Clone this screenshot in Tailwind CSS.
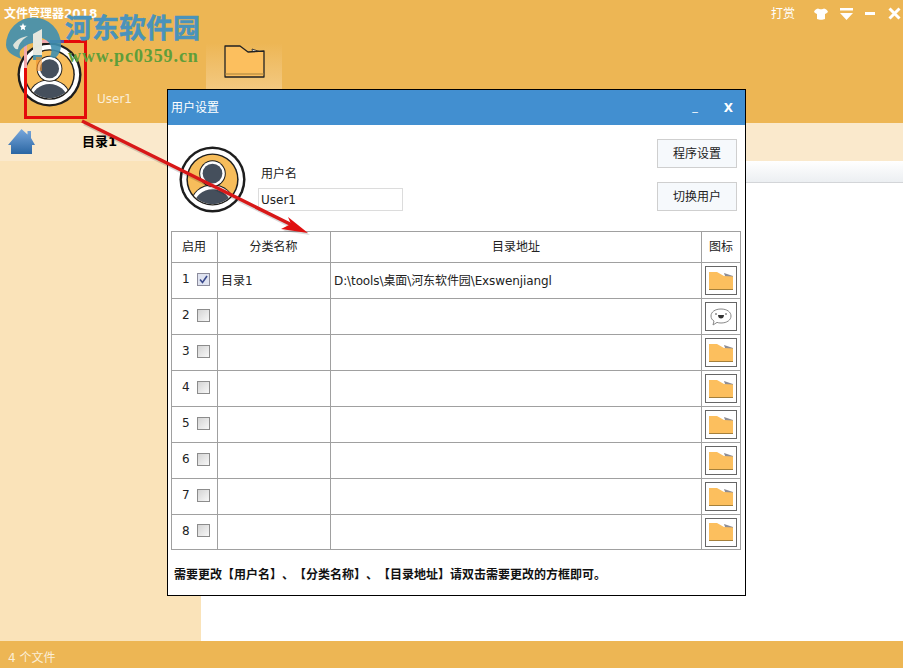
<!DOCTYPE html>
<html>
  <head>
    <meta charset="utf-8" />
    <title>文件管理器2018</title>
    <script src="https://cdn.jsdelivr.net/npm/@tailwindcss/browser@4"></script>
  </head>
  <body class="font-['DejaVu_Sans','Noto_Sans_CJK_SC',sans-serif] text-[12px] text-[#222]">
    <!-- shared icons -->
    <svg class="absolute h-0 w-0">
      <defs>
        <clipPath id="avatar-clip"><circle cx="34" cy="34" r="25" /></clipPath>
      </defs>
      <symbol id="avatar" viewBox="0 0 68 68">
        <circle cx="34" cy="34" r="33.500" fill="#1d1d1d" />
        <circle cx="34" cy="34" r="31" fill="#fff" />
        <circle cx="34" cy="34" r="26.500" fill="#1d1d1d" />
        <circle cx="34" cy="34" r="25" fill="#f7bd5b" />
        <g clip-path="url(#avatar-clip)">
          <ellipse cx="34" cy="58" rx="22" ry="19" fill="#1d1d1d" />
          <ellipse cx="34" cy="58" rx="21" ry="18" fill="#fff" />
          <ellipse cx="34" cy="60" rx="18.500" ry="16" fill="#454f5c" />
        </g>
        <circle cx="34" cy="28" r="13.500" fill="#1d1d1d" />
        <circle cx="34" cy="28" r="12.500" fill="#fff" />
        <circle cx="34" cy="28" r="10" fill="#454f5c" />
      </symbol>
      <symbol id="folder" viewBox="0 0 24 18">
        <path d="M15 1l9 3v3h-7z" fill="#8d8d95" />
        <path d="M0 0h8l7 4 9 .5V18H0z" fill="#fcbf5e" />
        <path d="M0 17.500h24" stroke="#a5803b" />
      </symbol>
    </svg>

    <div class="relative flex h-[668px] w-[903px] flex-col overflow-hidden bg-white">
      <!-- top bar -->
      <header class="flex h-[123px] shrink-0 flex-col bg-[#edb654] text-white">
        <div class="flex h-[27px] items-center justify-between pl-1 pr-[2px]">
          <span class="font-bold">文件管理器2018</span>
          <div class="flex items-center">
            <span class="mr-[19px]">打赏</span>
            <svg class="mr-[12px] h-3 w-[14px]" viewBox="0 0 14 12"><path d="M4 .5c1 1 5 1 6 0C12 1 13.500 2 14 4l-2.500 2-.5-.5V11c-2 1-6 1-8 0V5.500L2.500 6 0 4C.5 2 2 1 4 .5z" fill="#fff" /></svg>
            <svg class="mr-[12px] h-3 w-[13px]" viewBox="0 0 13 12"><path d="M0 0h13v2.500H0zM0 5h13l-6.500 7z" fill="#fff" /></svg>
            <div class="mr-[13px] h-[3px] w-[10px] bg-white"></div>
            <svg class="h-[13px] w-[13px]" viewBox="0 0 13 13"><path d="M1.500 1.500l10 10M11.500 1.500l-10 10" stroke="#fff" stroke-width="3" /></svg>
          </div>
        </div>
        <div class="flex flex-1">
          <div class="flex w-[206px] items-start">
            <svg class="ml-[17px] mt-[15px] h-[65px] w-[65px]"><use href="#avatar" /></svg>
            <span class="ml-[15px] mt-[63px] text-[#fbeed7]">User1</span>
          </div>
          <div class="mt-[16px] flex h-[80px] w-[76px] justify-center bg-gradient-to-b from-[#edb654] to-[#f7d69c] pt-[2px]">
            <svg class="h-[33px] w-[41px]" viewBox="0 0 41 33">
              <path d="M28 4l9 3v3h-8z" fill="#e8e8e8" stroke="#222" stroke-width=".8" />
              <path d="M1 1h15l8 6 16-1v26H1z" fill="#fcbf5e" stroke="#222" stroke-width="1.300" stroke-linejoin="round" />
              <path d="M1 29h39" stroke="#a5803b" />
            </svg>
          </div>
        </div>
      </header>

      <!-- path bar -->
      <div class="flex h-[38px] shrink-0 items-center bg-[#fae9cc] pl-2">
        <svg class="h-[26px] w-[27px]" viewBox="0 0 27 26">
          <defs>
            <linearGradient id="home" x1="0" y1="0" x2="0" y2="1"><stop offset="0" stop-color="#7aa8dc" /><stop offset="1" stop-color="#2a66a3" /></linearGradient>
          </defs>
          <path d="M13.500 0l6 5.500V2h3.500v7l4 7h-3v9H3v-9H0z" fill="url(#home)" />
        </svg>
        <span class="ml-[47px] text-[13px] font-bold text-black">目录1</span>
      </div>

      <!-- body -->
      <div class="flex flex-1">
        <aside class="w-[201px] bg-[#fae3b9]"></aside>
        <div class="flex-1">
          <div class="h-[22px] border-b border-[#d3d5d8] bg-gradient-to-b from-white to-[#eceff2]"></div>
        </div>
      </div>

      <footer class="flex h-[27px] shrink-0 items-center bg-[#edb654] pl-2 pt-[6px] text-[#fbeed7]">4 个文件</footer>

      <!-- user settings window -->
      <section class="absolute left-[167px] top-[89px] flex h-[507px] w-[579px] flex-col border border-black bg-white">
        <div class="flex h-[35px] shrink-0 items-center justify-between bg-[#428fd0] pl-[3px] pr-[12px] text-white">
          <span class="text-[12px]">用户设置</span>
          <div class="flex items-center gap-[26px] text-[12px] font-bold">
            <span class="text-[11px] font-normal">_</span>
            <span>X</span>
          </div>
        </div>

        <div class="flex h-[106px] shrink-0">
          <svg class="ml-[11px] mt-[21px] h-[67px] w-[67px]"><use href="#avatar" /></svg>
          <div class="ml-[12px] mt-[41px] flex flex-col">
            <span class="ml-[3px] h-[22px] leading-[16px]">用户名</span>
            <div class="flex h-[23px] w-[145px] items-center border border-[#dcdcdc] pl-[2px] text-[12px]">User1</div>
          </div>
          <div class="ml-auto mr-[8px] mt-[14px] flex flex-col gap-[14px]">
            <div class="flex h-[29px] w-[80px] items-center justify-center border border-[#cfcfcf] bg-[#f6f9fc]">程序设置</div>
            <div class="flex h-[29px] w-[80px] items-center justify-center border border-[#cfcfcf] bg-[#f6f9fc]">切换用户</div>
          </div>
        </div>

        <table class="ml-[3px] w-[569px] table-fixed border-collapse border border-[#a0a0a0]">
          <colgroup>
            <col class="w-[46px]" /><col class="w-[113px]" /><col class="w-[371px]" /><col class="w-[39px]" />
          </colgroup>
          <thead>
            <tr class="h-[31px] font-normal">
              <th class="border border-[#a0a0a0] pr-[1px] font-normal">启用</th>
              <th class="border border-[#a0a0a0] pr-[1px] font-normal">分类名称</th>
              <th class="border border-[#a0a0a0] font-normal">目录地址</th>
              <th class="border border-[#a0a0a0] font-normal">图标</th>
            </tr>
          </thead>
          <tbody>
            <tr class="h-[36px]">
              <td class="border border-[#a0a0a0]"><div class="flex items-center pb-[3px] pl-[10px]"><span class="w-[15px]">1</span><div class="flex h-[13px] w-[13px] items-center justify-center border border-[#8c8c9c] bg-[#dfe3f0]"><svg class="h-[11px] w-[11px]" viewBox="0 0 11 11"><path d="M2 5.500l2.500 3L9 2" fill="none" stroke="#3a4a8c" stroke-width="1.600" /></svg></div></div></td>
              <td class="border border-[#a0a0a0] pl-[3px]">目录1</td>
              <td class="border border-[#a0a0a0] pl-[3px] tracking-[-0.1px]">D:\tools\桌面\河东软件园\Exswenjiangl</td>
              <td class="border border-[#a0a0a0]"><div class="mx-auto flex h-[29px] w-[32px] items-center justify-center border border-[#666]"><svg class="h-[18px] w-[24px]"><use href="#folder" /></svg></div></td>
            </tr>
            <tr class="h-[36px]">
              <td class="border border-[#a0a0a0]"><div class="flex items-center pb-[3px] pl-[10px]"><span class="w-[15px]">2</span><div class="h-[13px] w-[13px] border border-[#8c8c8c] bg-gradient-to-br from-[#d4d4d4] to-[#f8f8f8]"></div></div></td>
              <td class="border border-[#a0a0a0]"></td>
              <td class="border border-[#a0a0a0]"></td>
              <td class="border border-[#a0a0a0]"><div class="mx-auto flex h-[29px] w-[32px] items-center justify-center border border-[#666]"><svg class="h-[20px] w-[22px]" viewBox="0 0 22 20"><path d="M11 2c6 0 10 3 10 7s-4 7-10 7c-1.500 0-3-.2-4-.6L3 18l1-4C2 13 1 11 1 9c0-4 4-7 10-7z" fill="#fff" stroke="#888" /><path d="M8 8h6c0 2.500-1.500 3.500-3 3.500S8 10.500 8 8z" fill="#333" /><path d="M5 7h2M15 7h2" stroke="#555" /></svg></div></td>
            </tr>
            <tr class="h-[36px]">
              <td class="border border-[#a0a0a0]"><div class="flex items-center pb-[3px] pl-[10px]"><span class="w-[15px]">3</span><div class="h-[13px] w-[13px] border border-[#8c8c8c] bg-gradient-to-br from-[#d4d4d4] to-[#f8f8f8]"></div></div></td>
              <td class="border border-[#a0a0a0]"></td>
              <td class="border border-[#a0a0a0]"></td>
              <td class="border border-[#a0a0a0]"><div class="mx-auto flex h-[29px] w-[32px] items-center justify-center border border-[#666]"><svg class="h-[18px] w-[24px]"><use href="#folder" /></svg></div></td>
            </tr>
            <tr class="h-[36px]">
              <td class="border border-[#a0a0a0]"><div class="flex items-center pb-[3px] pl-[10px]"><span class="w-[15px]">4</span><div class="h-[13px] w-[13px] border border-[#8c8c8c] bg-gradient-to-br from-[#d4d4d4] to-[#f8f8f8]"></div></div></td>
              <td class="border border-[#a0a0a0]"></td>
              <td class="border border-[#a0a0a0]"></td>
              <td class="border border-[#a0a0a0]"><div class="mx-auto flex h-[29px] w-[32px] items-center justify-center border border-[#666]"><svg class="h-[18px] w-[24px]"><use href="#folder" /></svg></div></td>
            </tr>
            <tr class="h-[36px]">
              <td class="border border-[#a0a0a0]"><div class="flex items-center pb-[3px] pl-[10px]"><span class="w-[15px]">5</span><div class="h-[13px] w-[13px] border border-[#8c8c8c] bg-gradient-to-br from-[#d4d4d4] to-[#f8f8f8]"></div></div></td>
              <td class="border border-[#a0a0a0]"></td>
              <td class="border border-[#a0a0a0]"></td>
              <td class="border border-[#a0a0a0]"><div class="mx-auto flex h-[29px] w-[32px] items-center justify-center border border-[#666]"><svg class="h-[18px] w-[24px]"><use href="#folder" /></svg></div></td>
            </tr>
            <tr class="h-[36px]">
              <td class="border border-[#a0a0a0]"><div class="flex items-center pb-[3px] pl-[10px]"><span class="w-[15px]">6</span><div class="h-[13px] w-[13px] border border-[#8c8c8c] bg-gradient-to-br from-[#d4d4d4] to-[#f8f8f8]"></div></div></td>
              <td class="border border-[#a0a0a0]"></td>
              <td class="border border-[#a0a0a0]"></td>
              <td class="border border-[#a0a0a0]"><div class="mx-auto flex h-[29px] w-[32px] items-center justify-center border border-[#666]"><svg class="h-[18px] w-[24px]"><use href="#folder" /></svg></div></td>
            </tr>
            <tr class="h-[36px]">
              <td class="border border-[#a0a0a0]"><div class="flex items-center pb-[3px] pl-[10px]"><span class="w-[15px]">7</span><div class="h-[13px] w-[13px] border border-[#8c8c8c] bg-gradient-to-br from-[#d4d4d4] to-[#f8f8f8]"></div></div></td>
              <td class="border border-[#a0a0a0]"></td>
              <td class="border border-[#a0a0a0]"></td>
              <td class="border border-[#a0a0a0]"><div class="mx-auto flex h-[29px] w-[32px] items-center justify-center border border-[#666]"><svg class="h-[18px] w-[24px]"><use href="#folder" /></svg></div></td>
            </tr>
            <tr class="h-[35px]">
              <td class="border border-[#a0a0a0]"><div class="flex items-center pb-[3px] pl-[10px]"><span class="w-[15px]">8</span><div class="h-[13px] w-[13px] border border-[#8c8c8c] bg-gradient-to-br from-[#d4d4d4] to-[#f8f8f8]"></div></div></td>
              <td class="border border-[#a0a0a0]"></td>
              <td class="border border-[#a0a0a0]"></td>
              <td class="border border-[#a0a0a0]"><div class="mx-auto flex h-[29px] w-[32px] items-center justify-center border border-[#666]"><svg class="h-[18px] w-[24px]"><use href="#folder" /></svg></div></td>
            </tr>
          </tbody>
        </table>

        <p class="ml-[6px] mt-[16px] whitespace-nowrap text-[12px] font-bold text-[#111] [text-spacing-trim:space-all]">需要更改【用户名】、【分类名称】、【目录地址】请双击需要更改的方框即可。</p>
      </section>

      <!-- annotation: red box and arrow -->
      <div class="absolute left-[24px] top-[40px] h-[79px] w-[63px] border-[3px] border-[#e40a0a]"></div>
      <svg class="absolute left-0 top-0 h-[668px] w-[903px]" viewBox="0 0 903 668">
        <path d="M84 124L294 228" stroke="#000" stroke-opacity=".15" stroke-width="3" />
        <path d="M310 235L290 220L293 226L283 231z" fill="#000" fill-opacity=".15" />
        <path d="M82 121L292 225" stroke="#d81818" stroke-width="3.500" />
        <path d="M308 233L288 217L291 224L281 229z" fill="#e01010" />
        <!-- box corner washed out under the watermark -->
        <path d="M25.500 68V41.500H50" fill="none" stroke="#f0a8ac" stroke-width="3" />
        <path d="M50 41.500H64" fill="none" stroke="#5c4fa0" stroke-width="3" />
      </svg>

      <!-- site watermark -->
      <svg class="absolute left-0 top-[5px] h-[70px] w-[100px]" viewBox="0 0 100 70">
        <path d="M6 40A27.500 27.500 0 0 1 61 40c0 5-2 10-6 13l-5-1c2-4 2-9 0-13-2-3-5-5-8-6v22h-9V38c-6 1-10 4-13 8-1 3 0 6 2 8-6-2-16-6-16-14z" fill="#3f8fb0" fill-opacity=".9" />
        <path d="M33 29l9-5v26h-9z" fill="#f6f1e4" fill-opacity=".9" />
        <path d="M13 40c3-5 8-8 15-9-5 3-9 7-10 13-2 1-4-1-5-4z" fill="#f6f1e4" fill-opacity=".85" />
        <path d="M23 18l1 2.500 2.500.3-1.800 1.800.5 2.600-2.200-1.300-2.200 1.300.5-2.600-1.800-1.800 2.500-.3z" fill="#fff" />
        <path d="M36 52h6v14h-6z" fill="#f08f2a" fill-opacity=".6" />
      </svg>
      <span class="absolute left-[65px] top-[11px] whitespace-nowrap text-[27px] font-bold leading-[36px] text-[#4a93bb] [-webkit-text-stroke:0.5px_#4a93bb]">河东软件园</span>
      <span class="absolute left-[68px] top-[46px] whitespace-nowrap font-['Liberation_Serif',serif] text-[18px] font-bold leading-[20px] tracking-[0.9px] text-[#5f9e3a]">www.pc0359.cn</span>
    </div>
  </body>
</html>
